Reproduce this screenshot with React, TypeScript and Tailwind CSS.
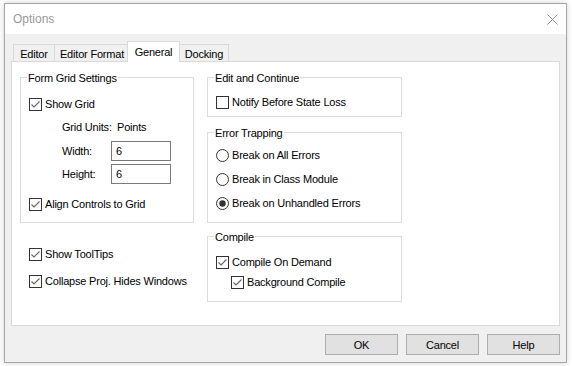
import React from "react";

const FONT = { fontFamily: "'Liberation Sans', Arial, sans-serif" };

function CheckBox({ checked }: { checked: boolean }) {
  return (
    <svg width="13" height="13" viewBox="0 0 13 13" className="shrink-0">
      <rect x="0.5" y="0.5" width="12" height="12" fill="#ffffff" stroke="#333333" />
      {checked && (
        <polyline points="2.5,6.5 5,9 10.5,3.5" fill="none" stroke="#666666" strokeWidth="1.1" />
      )}
    </svg>
  );
}

function Radio({ checked }: { checked: boolean }) {
  return (
    <svg width="13" height="13" viewBox="0 0 13 13" className="shrink-0">
      <circle cx="6.5" cy="6.5" r="6" fill="#ffffff" stroke="#333333" />
      {checked && <circle cx="6.5" cy="6.5" r="3.2" fill="#333333" />}
    </svg>
  );
}

function CheckRow({ label, checked, className = "" }: { label: string; checked: boolean; className?: string }) {
  return (
    <div className={`flex h-[16px] items-center gap-[3px] whitespace-nowrap ${className}`}>
      <CheckBox checked={checked} />
      <span className="leading-[16px]">{label}</span>
    </div>
  );
}

function RadioRow({ label, checked, className = "" }: { label: string; checked: boolean; className?: string }) {
  return (
    <div className={`flex h-[16px] items-center gap-[3px] whitespace-nowrap ${className}`}>
      <Radio checked={checked} />
      <span className="leading-[16px]">{label}</span>
    </div>
  );
}

function Group({ title, className = "", children }: { title: string; className?: string; children: React.ReactNode }) {
  return (
    <div className={`flex flex-col border border-[#dcdcdc] pl-[8px] ${className}`}>
      <span className="-mt-[8px] ml-[-2px] self-start whitespace-nowrap bg-white px-[1px] leading-[16px]">{title}</span>
      {children}
    </div>
  );
}

function Tab({ label, selected, className = "" }: { label: string; selected?: boolean; className?: string }) {
  return selected ? (
    <div
      className={`relative z-10 -mb-px flex h-[21px] shrink-0 items-start justify-center whitespace-nowrap border border-b-0 border-[#d9d9d9] bg-white pt-[2px] leading-[16px] ${className}`}
    >
      {label}
    </div>
  ) : (
    <div
      className={`flex h-[17px] shrink-0 items-center justify-center whitespace-nowrap border border-b-0 border-[#d9d9d9] bg-[#f0f0f0] pt-[1px] leading-[16px] ${className}`}
    >
      {label}
    </div>
  );
}

function Button({ label }: { label: string }) {
  return (
    <div className="flex h-[21px] w-[73px] items-center justify-center border border-[#adadad] bg-[#e1e1e1] leading-[16px]">
      {label}
    </div>
  );
}

export default function App() {
  return (
    <div
      className="h-[366px] w-[572px] bg-white pl-[4px] pt-[3px] text-[11px] tracking-[-0.2px] text-black"
      style={FONT}
    >
      <div className="flex h-[360px] w-[563px] flex-col border border-[#a6a6a6] bg-[#f0f0f0] shadow-[0_0_6px_rgba(0,0,0,0.18)]">
        {/* Title bar */}
        <div className="flex h-[30px] items-center justify-between bg-white pl-[8px] pr-[8px]">
          <span className="text-[12px] tracking-normal text-[#999999]">Options</span>
          <svg width="11" height="11" viewBox="0 0 11 11">
            <line x1="0.5" y1="0.5" x2="10.5" y2="10.5" stroke="#8c8c8c" strokeWidth="1" />
            <line x1="10.5" y1="0.5" x2="0.5" y2="10.5" stroke="#8c8c8c" strokeWidth="1" />
          </svg>
        </div>

        {/* Body */}
        <div className="flex flex-1 flex-col px-[6px] pt-[7px]">
          {/* Tabs */}
          <div className="flex h-[20px] items-end pl-[2px]">
            <Tab label="Editor" className="w-[42px]" />
            <Tab label="Editor Format" className="-ml-px w-[76px]" />
            <Tab label="General" selected className="-ml-[3px] w-[53px]" />
            <Tab label="Docking" className="-ml-px w-[50px]" />
          </div>

          {/* Panel */}
          <div className="flex h-[265px] gap-[13px] border border-[#d9d9d9] bg-white pl-[8px] pt-[15px]">
            {/* Left column */}
            <div className="flex w-[174px] shrink-0 flex-col">
              <Group title="Form Grid Settings" className="h-[146px]">
                <CheckRow label="Show Grid" checked className="mt-[10px]" />
                <div className="mt-[7px] flex h-[16px] items-center whitespace-nowrap pl-[33px]">
                  <span className="w-[55px] shrink-0">Grid Units:</span>
                  <span>Points</span>
                </div>
                <div className="mt-[6px] flex h-[20px] items-center whitespace-nowrap pl-[33px]">
                  <span className="w-[49px] shrink-0">Width:</span>
                  <div className="flex h-[20px] w-[60px] shrink-0 items-center border border-[#7a7a7a] pl-[4px]">6</div>
                </div>
                <div className="mt-[3px] flex h-[20px] items-center whitespace-nowrap pl-[33px]">
                  <span className="w-[49px] shrink-0">Height:</span>
                  <div className="flex h-[20px] w-[60px] shrink-0 items-center border border-[#7a7a7a] pl-[4px]">6</div>
                </div>
                <CheckRow label="Align Controls to Grid" checked className="mt-[12px]" />
              </Group>
              <div className="flex flex-col pl-[9px]">
                <CheckRow label="Show ToolTips" checked className="mt-[23px]" />
                <CheckRow label="Collapse Proj. Hides Windows" checked className="mt-[11px]" />
              </div>
            </div>

            {/* Right column */}
            <div className="flex w-[195px] shrink-0 flex-col">
              <Group title="Edit and Continue" className="h-[40px]">
                <CheckRow label="Notify Before State Loss" checked={false} className="mt-[8px]" />
              </Group>
              <Group title="Error Trapping" className="mt-[15px] h-[91px]">
                <RadioRow label="Break on All Errors" checked={false} className="mt-[6px]" />
                <RadioRow label="Break in Class Module" checked={false} className="mt-[8px]" />
                <RadioRow label="Break on Unhandled Errors" checked className="mt-[8px]" />
              </Group>
              <Group title="Compile" className="mt-[13px] h-[66px]">
                <CheckRow label="Compile On Demand" checked className="mt-[9px]" />
                <CheckRow label="Background Compile" checked className="ml-[15px] mt-[4px]" />
              </Group>
            </div>
          </div>

          {/* Buttons */}
          <div className="mt-[8px] flex justify-end gap-[8px]">
            <Button label="OK" />
            <Button label="Cancel" />
            <Button label="Help" />
          </div>
        </div>
      </div>
    </div>
  );
}
